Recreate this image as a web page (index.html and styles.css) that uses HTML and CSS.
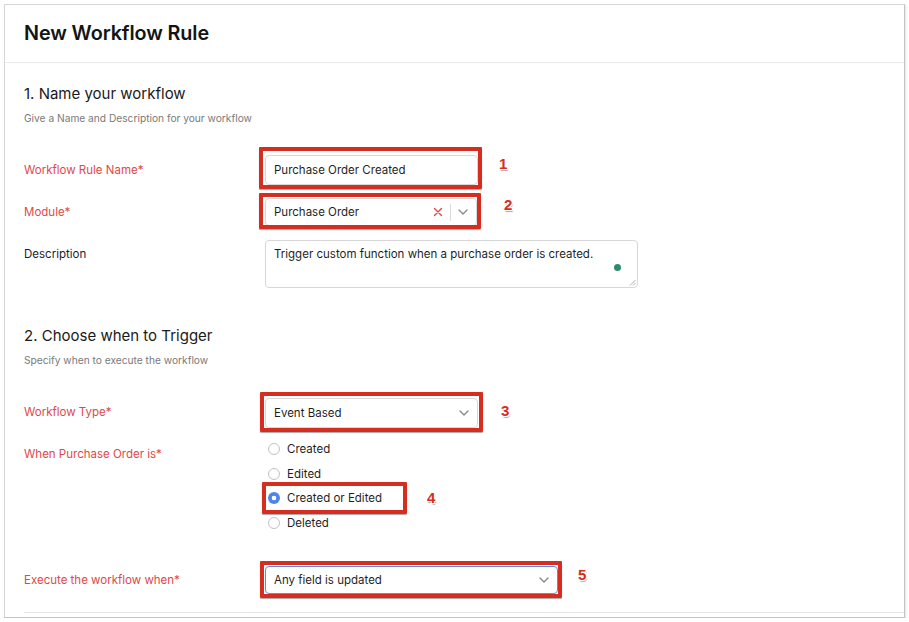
FILE: index.html
```html
<!DOCTYPE html>
<html>
<head>
<meta charset="utf-8">
<link rel="stylesheet" href="styles.css">
</head>
<body>
<div class="card">
  <div class="header"><h1 class="title">New Workflow Rule</h1></div>
  <div class="body">
    <h2 class="sec-title">1. Name your workflow</h2>
    <p class="sec-sub">Give a Name and Description for your workflow</p>

    <div class="row row-name">
      <div class="label req">Workflow Rule Name*</div>
      <div class="field w213">
        <div class="control"><span class="val">Purchase Order Created</span></div>
        <div class="annot a1"></div>
        <span class="num n1">1</span>
      </div>
    </div>

    <div class="row row-module">
      <div class="label req">Module*</div>
      <div class="field w212">
        <div class="control select">
          <span class="val">Purchase Order</span>
          <span class="clear">
            <svg width="10" height="10" viewBox="0 0 10 10"><path d="M1.5 1.5L8.5 8.5M8.5 1.5L1.5 8.5" stroke="#e0483e" stroke-width="1.4" stroke-linecap="round"/></svg>
          </span>
          <span class="sep"></span>
          <span class="chev"><svg width="10" height="6" viewBox="0 0 10 6"><path d="M1 1L5 5L9 1" fill="none" stroke="#8a8a8a" stroke-width="1.4" stroke-linecap="round" stroke-linejoin="round"/></svg></span>
        </div>
        <div class="annot a2"></div>
        <span class="num n2">2</span>
      </div>
    </div>

    <div class="row row-desc">
      <div class="label">Description</div>
      <div class="field w373">
        <div class="control textarea">
          <span class="val">Trigger custom function when a purchase order is created.</span>
          <span class="gdot"></span>
          <svg class="grip" width="7" height="7" viewBox="0 0 7 7"><path d="M6.5 1L1 6.5M6.5 4L4 6.5" stroke="#9a9a9a" stroke-width="0.8"/></svg>
        </div>
      </div>
    </div>

    <h2 class="sec-title sec2">2. Choose when to Trigger</h2>
    <p class="sec-sub">Specify when to execute the workflow</p>

    <div class="row row-type">
      <div class="label req">Workflow Type*</div>
      <div class="field w213">
        <div class="control select">
          <span class="val">Event Based</span>
          <span class="chev"><svg width="10" height="6" viewBox="0 0 10 6"><path d="M1 1L5 5L9 1" fill="none" stroke="#8a8a8a" stroke-width="1.4" stroke-linecap="round" stroke-linejoin="round"/></svg></span>
        </div>
        <div class="annot a3"></div>
        <span class="num n3">3</span>
      </div>
    </div>

    <div class="row row-when">
      <div class="label req lbl-when">When Purchase Order is*</div>
      <div class="radios">
        <div class="radio"><span class="circle"></span><span>Created</span></div>
        <div class="radio"><span class="circle"></span><span>Edited</span></div>
        <div class="radio checked">
          <span class="circle"></span><span>Created or Edited</span>
          <div class="annot a4"></div>
          <span class="num n4">4</span>
        </div>
        <div class="radio"><span class="circle"></span><span>Deleted</span></div>
      </div>
    </div>

    <div class="row row-exec">
      <div class="label req">Execute the workflow when*</div>
      <div class="field w293">
        <div class="control select focus">
          <span class="val">Any field is updated</span>
          <span class="chev"><svg width="10" height="6" viewBox="0 0 10 6"><path d="M1 1L5 5L9 1" fill="none" stroke="#8a8a8a" stroke-width="1.4" stroke-linecap="round" stroke-linejoin="round"/></svg></span>
        </div>
        <div class="annot a5"></div>
        <span class="num n5">5</span>
      </div>
    </div>

    <div class="bottom-line"></div>
  </div>
</div>
</body>
</html>
```

FILE: styles.css
```css
* { box-sizing: border-box; }
html, body { margin: 0; padding: 0; background: #ffffff; }
body {
  font-family: Inter, "Noto Sans", "Liberation Sans", sans-serif;
  color: #1d1d1f;
  padding: 4px 4px 0 4px;
}
.card {
  width: 901px;
  height: 614px;
  border: 1px solid #d6d6d6;
  border-right-color: #c4c4c4;
  border-bottom-color: #c4c4c4;
  box-shadow: 1px 1px 2px rgba(0,0,0,0.12);
  background: #fff;
  overflow: hidden;
}
.header {
  height: 58px;
  border-bottom: 1px solid #ececec;
  display: flex;
  align-items: center;
  padding-left: 19px;
  padding-bottom: 1px;
}
.title {
  margin: 0;
  font-size: 19.8px;
  font-weight: 600;
  letter-spacing: -0.1px;
  color: #141414;
}
.body { padding-left: 19px; }
.sec-title {
  margin: 21px 0 0 0;
  font-size: 15px;
  line-height: 20px;
  font-weight: 400;
  color: #1a1a1a;
}
.sec2 { margin-top: 38px; }
.sec-sub {
  margin: 7px 0 0 0;
  font-size: 10.2px;
  line-height: 14px;
  color: #7a7a7a;
}
.row {
  display: grid;
  grid-template-columns: 241px auto;
  align-items: center;
}
.row-name { margin-top: 30px; }
.row-module { margin-top: 13px; }
.row-desc { margin-top: 14px; align-items: start; }
.row-type { margin-top: 31px; }
.row-when { margin-top: 9px; align-items: start; }
.row-exec { margin-top: 31px; }
.label {
  font-size: 11.5px;
  line-height: 16px;
  color: #1d1d1f;
}
.label.req { color: #e04848; }
.row-type .label { margin-top: -3px; }
.row-desc .label { padding-top: 6px; }
.lbl-when { padding-top: 9px; }
.field { position: relative; }
.w213 { width: 213px; }
.w212 { width: 212px; }
.w373 { width: 373px; }
.w293 { width: 293px; }
.control {
  height: 30px;
  border: 1px solid #d7d7d7;
  border-radius: 4px;
  display: flex;
  align-items: center;
  padding: 0 8px;
  font-size: 11.5px;
  color: #1f1f1f;
  background: #fff;
}
.row-module .control { height: 28px; }
.row-exec .control { height: 28px; }
.control .val { flex: 1; white-space: nowrap; }
.select .chev { display: flex; align-items: center; width: 10px; margin-right: 0; }
.select .clear { display: flex; align-items: center; margin-right: 7px; }
.select .sep { width: 1px; height: 17px; background: #dadada; margin-right: 7px; }
.focus { border-color: #5b8def; }
.textarea {
  height: 48px;
  align-items: flex-start;
  padding-top: 6px;
  position: relative;
}
.gdot {
  position: absolute;
  right: 16px;
  top: 23px;
  width: 7px;
  height: 7px;
  border-radius: 50%;
  background: #2f8a6e;
}
.grip { position: absolute; right: 1px; bottom: 1px; }
.radios { display: flex; flex-direction: column; }
.radio {
  position: relative;
  height: 24.6px;
  display: flex;
  align-items: center;
  font-size: 11.5px;
  color: #1f1f1f;
  padding-left: 3px;
  width: 140px;
}
.circle {
  width: 12px;
  height: 12px;
  border-radius: 50%;
  border: 1px solid #c2c2c2;
  background: #fff;
  margin-right: 7px;
  flex: none;
}
.checked .circle {
  border: none;
  background: radial-gradient(circle, #ffffff 0 2px, #4f84ec 2.6px);
}
.annot {
  position: absolute;
  border: 4px solid #d52d20;
  border-radius: 1px;
  box-shadow: 0 1px 1px rgba(0,0,0,0.35);
  pointer-events: none;
}
.a1 { left: -6px; right: -4px; top: -8px; bottom: -4px; }
.a2 { left: -6px; right: -4px; top: -5px; bottom: -3px; }
.a3 { left: -5px; right: -5px; top: -6px; bottom: -4px; }
.a4 { left: -3px; top: -4px; width: 145px; bottom: -3px; }
.a5 { left: -5px; right: -4px; top: -5px; bottom: -4px; }
.num {
  position: absolute;
  font-family: "Liberation Sans", Arial, sans-serif;
  font-weight: 700;
  font-size: 15px;
  line-height: 15px;
  color: #d52d20;
  text-shadow: -1px -1px 0 #fff, 1px -1px 0 #fff, -1px 1px 0 #fff, 1px 1px 0 #fff, 1px 2px 1px rgba(0,0,0,0.35);
}
.n1 { left: 234px; top: 1px; }
.n2 { left: 239px; top: -1px; }
.n3 { left: 236px; top: 5px; }
.n4 { left: 162px; top: 4px; }
.n5 { left: 313px; top: 1px; }
.bottom-line {
  margin-top: 18px;
  height: 1px;
  background: #e6e6e6;
  margin-right: 0;
}
```
